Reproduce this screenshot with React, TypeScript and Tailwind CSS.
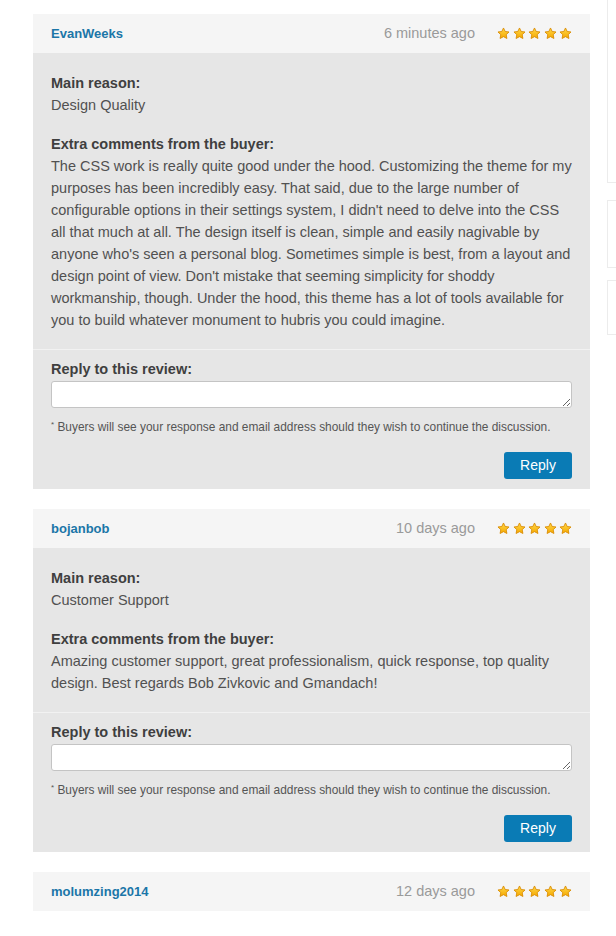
import React from 'react';

type Review = {
  user: string;
  time: string;
  reason?: string;
  comment?: string;
};

const reviews: Review[] = [
  {
    user: 'EvanWeeks',
    time: '6 minutes ago',
    reason: 'Design Quality',
    comment:
      "The CSS work is really quite good under the hood. Customizing the theme for my purposes has been incredibly easy. That said, due to the large number of configurable options in their settings system, I didn't need to delve into the CSS all that much at all. The design itself is clean, simple and easily nagivable by anyone who's seen a personal blog. Sometimes simple is best, from a layout and design point of view. Don't mistake that seeming simplicity for shoddy workmanship, though. Under the hood, this theme has a lot of tools available for you to build whatever monument to hubris you could imagine.",
  },
  {
    user: 'bojanbob',
    time: '10 days ago',
    reason: 'Customer Support',
    comment:
      'Amazing customer support, great professionalism, quick response, top quality design. Best regards Bob Zivkovic and Gmandach!',
  },
  { user: 'molumzing2014', time: '12 days ago' },
];

function Star() {
  return (
    <svg width="13" height="13" viewBox="0 0 24 24">
      <defs>
        <linearGradient id="sg" x1="0" y1="0" x2="0" y2="1">
          <stop offset="0%" stopColor="#ffd94a" />
          <stop offset="100%" stopColor="#f5a800" />
        </linearGradient>
      </defs>
      <path
        d="M12 1.8l3.1 6.5 7.1.9-5.2 4.9 1.3 7.1L12 17.8l-6.3 3.4 1.3-7.1-5.2-4.9 7.1-.9z"
        fill="url(#sg)"
        stroke="#d98a00"
        strokeWidth="1.6"
        strokeLinejoin="round"
      />
    </svg>
  );
}

function ReviewCard({ r }: { r: Review }) {
  return (
    <div className="w-[557px]">
      {/* header */}
      <div className="h-[39px] bg-[#f5f5f5] flex items-center px-[18px]">
        <span className="text-[13px] font-bold text-[#1b76a8]">{r.user}</span>
        <span className="ml-auto text-[14.5px] text-[#9a9a9a]">{r.time}</span>
        <div className="ml-[22px] flex gap-[2.5px]">
          {[0, 1, 2, 3, 4].map((i) => (
            <Star key={i} />
          ))}
        </div>
      </div>
      {r.reason && (
        <>
          <div className="bg-[#e6e6e6] px-[18px] pt-[19px] pb-[18px] text-[14.5px] leading-[22px] text-[#515151]">
            <div className="font-bold text-[#3f3f3f]">Main reason:</div>
            <div>{r.reason}</div>
            <div className="mt-[17px] font-bold text-[#3f3f3f]">Extra comments from the buyer:</div>
            <div className="pr-[4px] -mr-[8px]">{r.comment}</div>
          </div>
          <div className="bg-[#e6e6e6] border-t border-[#f2f2f2] px-[18px] pt-[8px] pb-[10px]">
            <div className="text-[14.5px] leading-[22px] font-bold text-[#3f3f3f]">Reply to this review:</div>
            <textarea className="mt-px block w-full h-[27px] bg-white border border-[#c4c4c4] rounded-[3px]" />
            <div className="mt-[11px] text-[11.9px] leading-[16px] text-[#555]">
              <sup className="text-[8px]">*</sup> Buyers will see your response and email address should they wish to continue the discussion.
            </div>
            <div className="mt-[17px] flex justify-end">
              <button className="w-[68px] h-[27px] rounded-[3px] bg-[#0a7bb5] text-white text-[14px]">Reply</button>
            </div>
          </div>
        </>
      )}
    </div>
  );
}

export default function App() {
  return (
    <div className="w-[616px] h-[936px] overflow-hidden bg-white flex font-['Liberation_Sans',Arial,sans-serif]">
      <div className="pl-[33px] pt-[14px] flex flex-col gap-[20px]">
        {reviews.map((r) => (
          <ReviewCard key={r.user} r={r} />
        ))}
      </div>
      {/* sidebar cut off at the right edge */}
      <div className="ml-[17px] flex flex-col shrink-0">
        <div className="w-[60px] h-[183px] border-l border-b border-[#ececec]" />
        <div className="mt-[17px] w-[60px] h-[68px] border border-r-0 border-[#ececec]" />
        <div className="mt-[12px] w-[60px] h-[55px] border border-r-0 border-[#ececec]" />
      </div>
    </div>
  );
}
